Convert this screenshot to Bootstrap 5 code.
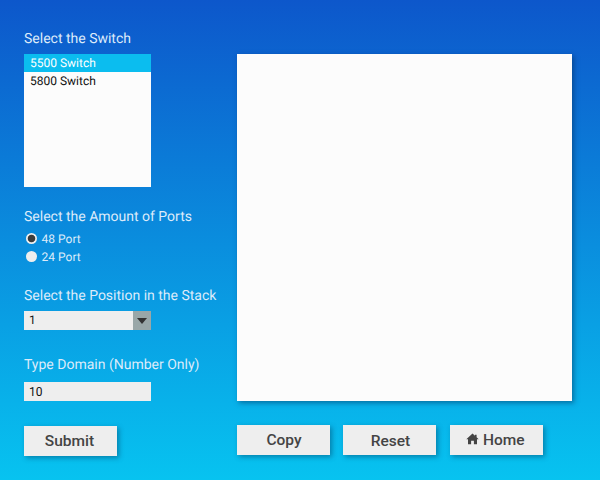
<!DOCTYPE html>
<html lang="en">
<head>
<meta charset="utf-8">
<meta name="viewport" content="width=device-width, initial-scale=1">
<title>Switch Configuration</title>
<link href="https://cdn.jsdelivr.net/npm/bootstrap@5.3.0/dist/css/bootstrap.min.css" rel="stylesheet">
<style>
html,body{height:100%}
body{font-family:Roboto,"Liberation Sans",sans-serif;background:linear-gradient(#0d57cb,#07c3f0);overflow:hidden;text-rendering:geometricPrecision}
.page{width:600px;height:480px;padding:28px 28px 0 24px}
.side{width:213px}
.field-title{font-size:14px;line-height:22px;height:20px;color:#dcebfa;white-space:nowrap;font-weight:400}
.g-stack .field-title,.g-domain .field-title{line-height:21px}
.switches{width:127px;height:133px;margin-top:6.4px;background:#fcfcfc;font-size:12px}
.switches .list-group-item{height:17.4px;line-height:18.5px;padding:0 6px;background:none;color:#111}
.switches .list-group-item.active{background:#0bbdef;color:#fff}
.g-ports{margin-top:18.6px}
.g-stack{margin-top:20px}
.g-domain{margin-top:24.4px}
.port{height:18px;font-size:12px;color:#dcebfa;line-height:18px}
.port input.form-check-input{width:11px;height:11px;margin:0 5px 1px 1.6px;background:#eee;border:0;float:none;box-shadow:none}
.port input.form-check-input:checked{background:radial-gradient(circle,#3c3c3c 3.4px,#eee 4.2px)}
.box{width:127px;height:19.4px;margin-top:5px;background:#eee;color:#111;font-size:12px}
.box-value{padding-left:5px;line-height:19px}
.arrow{width:18px;background:#99a7a8}
.domain{padding:0 5px;border:0;border-radius:0;height:19.4px;margin-top:7.2px;line-height:19px;min-height:0}
.domain:focus{background:#eee}
.output{width:335px;height:347px;margin-top:26.4px;background:#fcfcfc;box-shadow:2px 2px 5px rgba(0,45,90,.5)}
.action{width:93px;height:30px;padding:0;border:0;border-radius:0;background:#eee;color:#444;font-size:15.5px;font-weight:500;line-height:30px;box-shadow:2px 2px 5px rgba(0,55,90,.45)}
.g-submit{margin-top:24.8px;padding-right:2px}
.g-actions{margin-top:23.6px;gap:13.4px}
.copy{padding-left:1px}
.reset{padding-top:1px;padding-left:1px}
.home{padding-right:2px}
.home svg{margin-bottom:1px}
</style>
<script src="https://cdn.jsdelivr.net/npm/bootstrap@5.3.0/dist/js/bootstrap.bundle.min.js"></script>
</head>
<body>
<main class="page d-flex">
<form class="side flex-shrink-0">
  <label class="field-title d-block">Select the Switch</label>
  <div class="switches list-group list-group-flush rounded-0">
    <div class="list-group-item border-0 active">5500 Switch</div>
    <div class="list-group-item border-0">5800 Switch</div>
  </div>
  <div class="g-ports">
    <div class="field-title">Select the Amount of Ports</div>
    <label class="port d-flex align-items-center mt-1"><input class="form-check-input" type="radio" name="ports" checked>48 Port</label>
    <label class="port d-flex align-items-center"><input class="form-check-input" type="radio" name="ports">24 Port</label>
  </div>
  <div class="g-stack">
    <div class="field-title">Select the Position in the Stack</div>
    <div class="box d-flex justify-content-between">
      <span class="box-value">1</span>
      <span class="arrow d-flex align-items-center justify-content-center"><svg width="10" height="6" viewBox="0 0 10 6"><path d="M0 0h10L5 6z" fill="#333"/></svg></span>
    </div>
  </div>
  <div class="g-domain">
    <div class="field-title">Type Domain (Number Only)</div>
    <input class="box domain form-control" type="text" value="10" aria-label="Domain">
  </div>
  <button class="btn action g-submit d-block" type="button">Submit</button>
</form>
<section>
  <div class="output"></div>
  <div class="g-actions d-flex">
    <button class="btn action copy" type="button">Copy</button>
    <button class="btn action reset" type="button">Reset</button>
    <button class="btn action home d-flex align-items-center justify-content-center" type="button"><svg class="me-1" width="13" height="12" viewBox="0 0 13 12"><path d="M6.5 .5 9 2.8V1.8h1.6v2.5L12.7 6.3H11v5H7.9V7.7H5.1v3.6H2v-5H.3z" fill="#444"/></svg>Home</button>
  </div>
</section>
</main>
</body>
</html>
